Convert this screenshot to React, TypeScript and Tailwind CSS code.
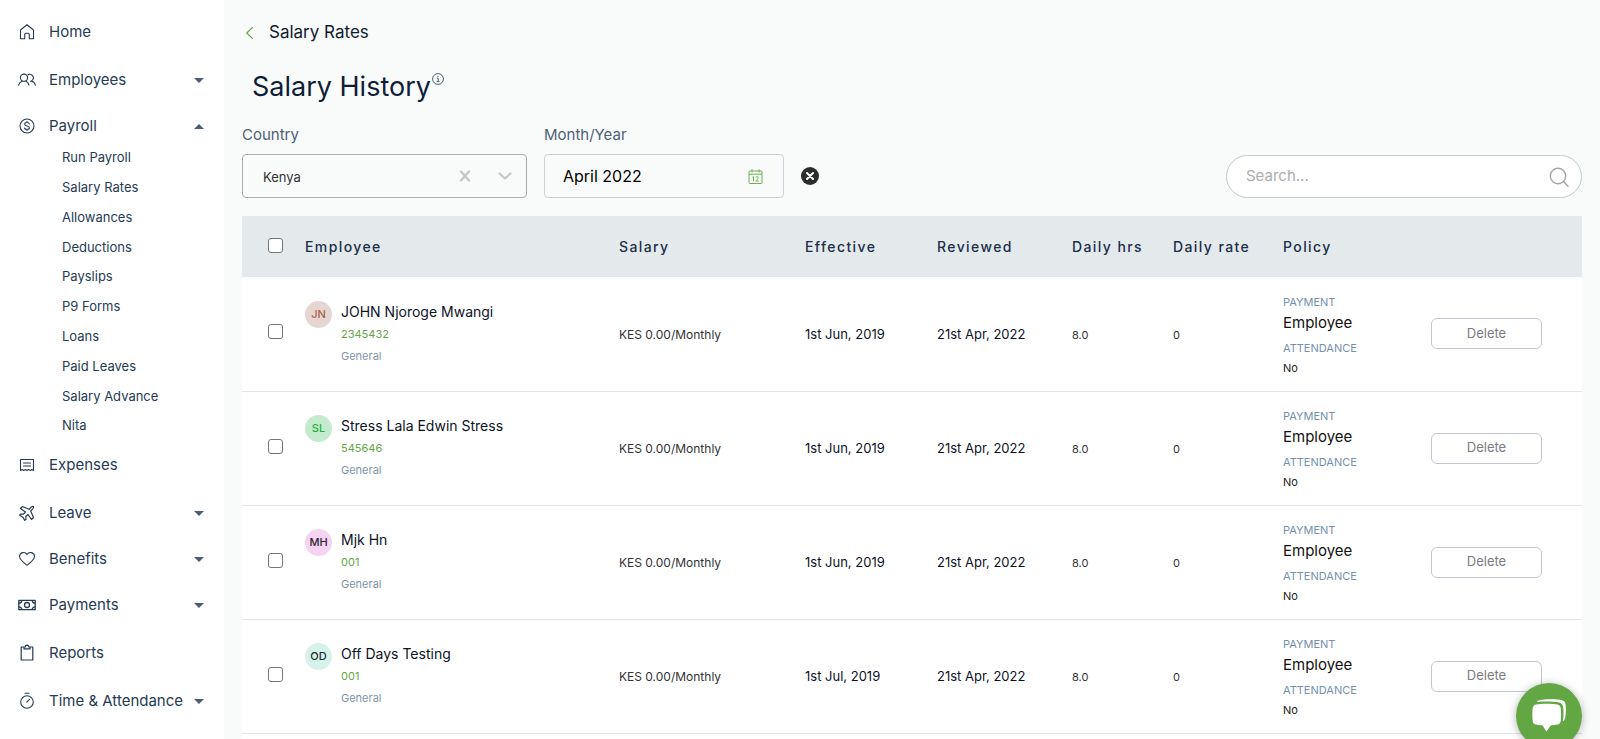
import type { ReactNode } from "react";

type NavItem = { label: string; icon: ReactNode; group?: boolean; children?: string[] };

function Icon({ children, width = 1.1 }: { children: ReactNode; width?: number }) {
  return (
    <svg
      aria-hidden="true"
      className="size-[18px] shrink-0"
      viewBox="0 0 18 18"
      fill="none"
      stroke="currentColor"
      strokeWidth={width}
      strokeLinecap="round"
      strokeLinejoin="round"
    >
      {children}
    </svg>
  );
}

const navItems: NavItem[] = [
  {
    label: "Home",
    icon: (
      <Icon>
        <path d="M2.5 7 9 1.800 15.500 7v8.700h-4.200v-4.500a1 1 0 0 0-1-1H7.700a1 1 0 0 0-1 1v4.500H2.500z" />
      </Icon>
    ),
  },
  {
    label: "Employees",
    group: true,
    icon: (
      <Icon>
        <circle cx="6" cy="6.700" r="3.600" />
        <path d="M.6 14.200C1.200 12 2.400 10.800 4 10.200M11 14.200C10.400 12 9.500 10.800 8 10.200" />
        <path d="M10 3.800A3.500 3.500 0 1 1 12.500 10.200M13.600 10.200C15.600 10.700 16.900 12 17.400 14.200" />
      </Icon>
    ),
  },
  {
    label: "Payroll",
    group: true,
    icon: (
      <Icon>
        <circle cx="9" cy="9" r="7" />
        <path d="M11.300 6.900C11 5.900 10.100 5.500 9 5.500c-1.300 0-2.300.6-2.300 1.700C6.700 9.600 11.400 8.300 11.400 10.800c0 1.100-1.100 1.700-2.400 1.700-1.200 0-2.200-.5-2.500-1.500M9 4.400v1.100M9 12.500v1.100" />
      </Icon>
    ),
    children: [
      "Run Payroll",
      "Salary Rates",
      "Allowances",
      "Deductions",
      "Payslips",
      "P9 Forms",
      "Loans",
      "Paid Leaves",
      "Salary Advance",
      "Nita",
    ],
  },
  {
    label: "Expenses",
    icon: (
      <Icon>
        <path d="M2.500 14.500V3.500h13v11l-1.600-1-1.600 1-1.700-1-1.600 1-1.600-1-1.700 1-1.600-1zM5.500 7h7M5.500 10h7" />
      </Icon>
    ),
  },
  {
    label: "Leave",
    group: true,
    icon: (
      <Icon width={1.200}>
        <path d="M11 5.300 4.500 2.500 2.500 4.500 7.500 8 5.500 10.200 2.500 10 1.700 11.200 4.800 13.200 6.800 16.300 8 15.500 7.800 12.500 10 10.500 13.500 15.500 15.500 13.500 12.700 7C14.700 5.200 16 3.600 15.400 2.600 14.400 2 12.800 3.300 11 5.300z" />
      </Icon>
    ),
  },
  {
    label: "Benefits",
    group: true,
    icon: (
      <Icon>
        <path d="M9 15.300C5.500 12.700 1.500 9.800 1.500 6.300A4 4 0 0 1 9 4.600a4 4 0 0 1 7.500 1.700c0 3.500-4 6.400-7.500 9z" />
      </Icon>
    ),
  },
  {
    label: "Payments",
    group: true,
    icon: (
      <Icon width={1.300}>
        <path d="M.8 4.300h16.400v9.400H.8z" />
        <path d="M3.800 4.600A3 3 0 0 1 1 7.200M14.200 4.600A3 3 0 0 0 17 7.200M3.800 13.400A3 3 0 0 0 1 10.800M14.200 13.400A3 3 0 0 1 17 10.800" />
        <circle cx="9" cy="9" r="2.500" />
      </Icon>
    ),
  },
  {
    label: "Reports",
    icon: (
      <Icon width={1.200}>
        <path d="M6 3H3.200v13h11.600V3H12M6 3v1.900h6V3h-1.200a1.800 1.800 0 0 0-3.600 0z" />
      </Icon>
    ),
  },
  {
    label: "Time & Attendance",
    group: true,
    icon: (
      <Icon>
        <circle cx="9" cy="10" r="6.300" />
        <path d="M7 1.200h4M8.700 10.200l2.800-2.900" />
      </Icon>
    ),
  },
];

function NavLabel({ item }: { item: NavItem }) {
  return (
    <>
      {item.icon}
      <span className="min-w-0 flex-1 text-left whitespace-nowrap">{item.label}</span>
    </>
  );
}

function Sidebar() {
  return (
    <nav aria-label="Main" className="w-56 shrink-0 bg-white pt-[7px] text-[15px] text-[#263b55]">
      {navItems.map((item) =>
        item.group ? (
          <div key={item.label}>
            <button
              type="button"
              aria-expanded={Boolean(item.children)}
              className="flex h-[46px] w-full items-center gap-[13px] pr-5 pl-[18px]"
            >
              <NavLabel item={item} />
              <svg
                aria-hidden="true"
                className={item.children ? "h-[5px] w-[10px] shrink-0 rotate-180" : "h-[5px] w-[10px] shrink-0"}
                viewBox="0 0 10 5"
                fill="#4a5d75"
              >
                <path d="M0 0h10L5 5z" />
              </svg>
            </button>
            {item.children && (
              <ul className="-mt-1.5 -mb-px grid h-[298px] auto-rows-fr pl-[62px] text-[13px]">
                {item.children.map((child) => (
                  <li key={child} className="flex items-center">
                    <a href="#">{child}</a>
                  </li>
                ))}
              </ul>
            )}
          </div>
        ) : (
          <a key={item.label} href="#" className="flex h-[50px] items-center gap-[13px] pr-5 pl-[18px]">
            <NavLabel item={item} />
          </a>
        ),
      )}
    </nav>
  );
}

const rows = [
  { name: "JOHN Njoroge Mwangi", id: "2345432", initials: "JN", avatar: "bg-[#e6d6d1] text-[#a8634d]", effective: "1st Jun, 2019" },
  { name: "Stress Lala Edwin Stress", id: "545646", initials: "SL", avatar: "bg-[#c5ebce] text-[#1fae3f]", effective: "1st Jun, 2019" },
  { name: "Mjk Hn", id: "001", initials: "MH", avatar: "bg-[#f6d3f2] text-[#2b2533]", effective: "1st Jun, 2019" },
  { name: "Off Days Testing", id: "001", initials: "OD", avatar: "bg-[#d7f2ea] text-[#1d2f33]", effective: "1st Jul, 2019" },
];

const checkbox =
  "block size-[15px] appearance-none rounded-[3px] border border-[#767676] bg-white checked:bg-[#62a744]";

function Filters() {
  return (
    <div className="mt-[14px] flex items-end">
      <div>
        <label htmlFor="country" className="block text-[15px] leading-6 text-[#4f6078]">
          Country
        </label>
        <div className="relative mt-[7px]">
          <select
            id="country"
            className="block h-11 w-[285px] appearance-none rounded-[4px] border border-[#a8adab] bg-transparent pt-[3px] pl-5 text-[13px] text-[#333]"
          >
            <option>Kenya</option>
          </select>
          <button type="button" aria-label="Clear country" className="absolute top-4 right-14 text-[#c6c8c8]">
            <svg className="size-3" viewBox="0 0 12 12" fill="none" stroke="currentColor" strokeWidth="2.400" strokeLinecap="round">
              <path d="m2 1.500 8 9M10 1.500l-8 9" />
            </svg>
          </button>
          <svg
            aria-hidden="true"
            className="pointer-events-none absolute top-[18px] right-[15px] h-2 w-[14px] text-[#c6c8c8]"
            viewBox="0 0 14 8"
            fill="none"
            stroke="currentColor"
            strokeWidth="2.200"
            strokeLinecap="round"
            strokeLinejoin="round"
          >
            <path d="m1.500 1.500 5.500 5 5.500-5" />
          </svg>
        </div>
      </div>
      <div className="ml-[17px]">
        <label htmlFor="month" className="block text-[15px] leading-6 text-[#4f6078]">
          Month/Year
        </label>
        <div className="mt-[7px] flex h-11 w-[240px] items-center rounded-[4px] border border-[#cdd0d9] pr-5 pl-[18px]">
          <input id="month" defaultValue="April 2022" className="min-w-0 flex-1 bg-transparent text-base text-black outline-none" />
          <svg aria-hidden="true" className="size-[15px] shrink-0" viewBox="0 0 15 15" fill="none" stroke="#6bb04f" strokeWidth="1">
            <rect x="1" y="2" width="13" height="12.500" rx=".8" />
            <path d="M1 5.200h13M4 .3v3.200M11 .3v3.200M4.500 8.300l1-.8v4.700M8 8.500c.2-1.300 2.500-1.200 2.300.2C10.200 9.900 8.300 10.800 8 12.100h2.600" />
          </svg>
        </div>
      </div>
      <button type="button" aria-label="Clear month" className="mb-[13px] ml-[17px]">
        <svg className="size-[18px]" viewBox="0 0 18 18">
          <circle cx="9" cy="9" r="9" fill="#2d2d2d" />
          <path d="m6 6 6 6M12 6l-6 6" stroke="#fff" strokeWidth="2" strokeLinecap="round" />
        </svg>
      </button>
      <div className="ml-auto flex h-[43px] w-[356px] items-center rounded-full border border-[#c3c8cc] bg-white pr-3 pl-[19px]">
        <input
          type="search"
          aria-label="Search"
          placeholder="Search..."
          className="min-w-0 flex-1 bg-transparent text-[15px] outline-none placeholder:text-[#adadad]"
        />
        <svg aria-hidden="true" className="size-5 shrink-0" viewBox="0 0 20 20" fill="none" stroke="#a3a6a8" strokeWidth="1.400" strokeLinecap="round">
          <circle cx="9" cy="9" r="7.700" />
          <path d="m14.600 14.600 4.400 4.600" />
        </svg>
      </div>
    </div>
  );
}

function SalaryTable() {
  return (
    <div className="mt-[18px] flex-1 bg-white">
      <table className="w-full table-fixed text-left">
        <colgroup>
          <col className="w-[63px]" />
          <col />
          <col className="w-[186px]" />
          <col className="w-[132px]" />
          <col className="w-[135px]" />
          <col className="w-[101px]" />
          <col className="w-[110px]" />
          <col className="w-[148px]" />
          <col className="w-[151px]" />
        </colgroup>
        <thead>
          <tr className="h-[61px] bg-[#e4e9ec] text-sm tracking-widest whitespace-nowrap text-[#1b2f49]">
            <th className="pb-0.5 pl-[26px]">
              <input type="checkbox" aria-label="Select all employees" className={checkbox} />
            </th>
            <th className="font-medium">Employee</th>
            <th className="font-medium">Salary</th>
            <th className="font-medium">Effective</th>
            <th className="font-medium">Reviewed</th>
            <th className="font-medium">Daily hrs</th>
            <th className="font-medium">Daily rate</th>
            <th className="font-medium">Policy</th>
            <td />
          </tr>
        </thead>
        <tbody>
          {rows.map((row) => (
            <tr key={row.name} className="h-[114px] border-b border-[#dfe7ea]">
              <td className="pb-1 pl-[26px]">
                <input type="checkbox" aria-label={`Select ${row.name}`} className={checkbox} />
              </td>
              <td>
                <div className="flex gap-[9px]">
                  <span className={`flex size-[27px] items-center justify-center rounded-full text-[11px] font-medium ${row.avatar}`}>
                    {row.initials}
                  </span>
                  <div className="text-[11px] leading-[22px]">
                    <p className="text-sm leading-[22px] text-[#0c1226]">{row.name}</p>
                    <p className="text-[#62a744]">{row.id}</p>
                    <p className="text-[#8094ac]">General</p>
                  </div>
                </div>
              </td>
              <td className="pt-0.5 text-xs text-[#333]">KES 0.00/Monthly</td>
              <td className="pt-0.5 text-[13px] text-[#0c1226]">{row.effective}</td>
              <td className="pt-0.5 text-[13px] text-[#0c1226]">21st Apr, 2022</td>
              <td className="pt-0.5 text-[11px] text-[#333]">8.0</td>
              <td className="pt-0.5 text-[11px] text-[#333]">0</td>
              <td className="pt-0.5 text-[11px] leading-5">
                <p className="text-[#7590ad]">PAYMENT</p>
                <p className="text-[15px] leading-[22px] text-[#111]">Employee</p>
                <p className="mt-1 text-[#7590ad]">ATTENDANCE</p>
                <p className="text-[#222]">No</p>
              </td>
              <td>
                <button
                  type="button"
                  className="block h-[31px] w-[111px] rounded-[6px] border border-[#c3c7cf] bg-white text-[13px] text-[#797c80]"
                >
                  Delete
                </button>
              </td>
            </tr>
          ))}
        </tbody>
      </table>
    </div>
  );
}

export default function App() {
  return (
    <div className="flex min-h-screen bg-[#f9fbfa] font-['Inter','Liberation_Sans',sans-serif]">
      <Sidebar />
      <main className="flex min-w-0 flex-1 flex-col px-[18px] pt-[21px]">
        <a href="#" className="flex h-6 items-center gap-4 self-start pl-1 text-[17px] text-[#101a2c]">
          <svg aria-hidden="true" className="h-3 w-[7px]" viewBox="0 0 7 12" fill="none" stroke="#62a744" strokeWidth="1.200" strokeLinecap="round" strokeLinejoin="round">
            <path d="M6.400.6.8 6l5.600 5.400" />
          </svg>
          Salary Rates
        </a>
        <h1 className="mt-5 flex pl-[10px] text-[27px] leading-[44px] text-[#0e1e38]">
          Salary History
          <svg aria-hidden="true" className="mt-2 ml-px size-3" viewBox="0 0 12 12" fill="none" stroke="#3b4960" strokeWidth=".9">
            <circle cx="6" cy="6" r="5.400" />
            <path d="M4.800 5.200H6.200v3.300M4.700 8.600h2.800M6 2.900v1.100" />
          </svg>
        </h1>
        <Filters />
        <SalaryTable />
      </main>
      <button
        type="button"
        aria-label="Open chat"
        className="fixed right-[18px] -bottom-[10px] flex size-[66px] items-center justify-center rounded-full bg-[#62a744] shadow-[0_1px_8px_rgba(0,0,0,0.3)]"
      >
        <svg className="h-[34px] w-[36px]" viewBox="0 0 36 34" fill="#fff">
          <path d="M7.500 1.500C13-.1 26-.2 31 1.200c2.400.7 3.300 2 3.600 4.300.5 4 .3 9-.3 12.800-.4 2.300-1.400 3.600-2.500 4 .9-5 .9-10.800.3-14.500-.4-2.500-1.600-3.800-4-4.300C22.600 2.400 12.800 2.200 5.800 3c.3-.8.900-1.200 1.700-1.500z" />
          <path d="M5 5.400C10 4.400 22 4.400 26.400 5.400c2 .4 3 1.500 3.300 3.600.5 4 .5 9 0 13-.3 2.100-1.400 3.200-3.300 3.600-2 .4-4 .6-6.400.7l-4.600 6.200-4-6.200c-2.400-.1-4.600-.3-6.400-.7-1.900-.4-3-1.500-3.300-3.600-.5-4-.5-9 0-13C2 6.900 3 5.800 5 5.400z" />
        </svg>
      </button>
    </div>
  );
}
